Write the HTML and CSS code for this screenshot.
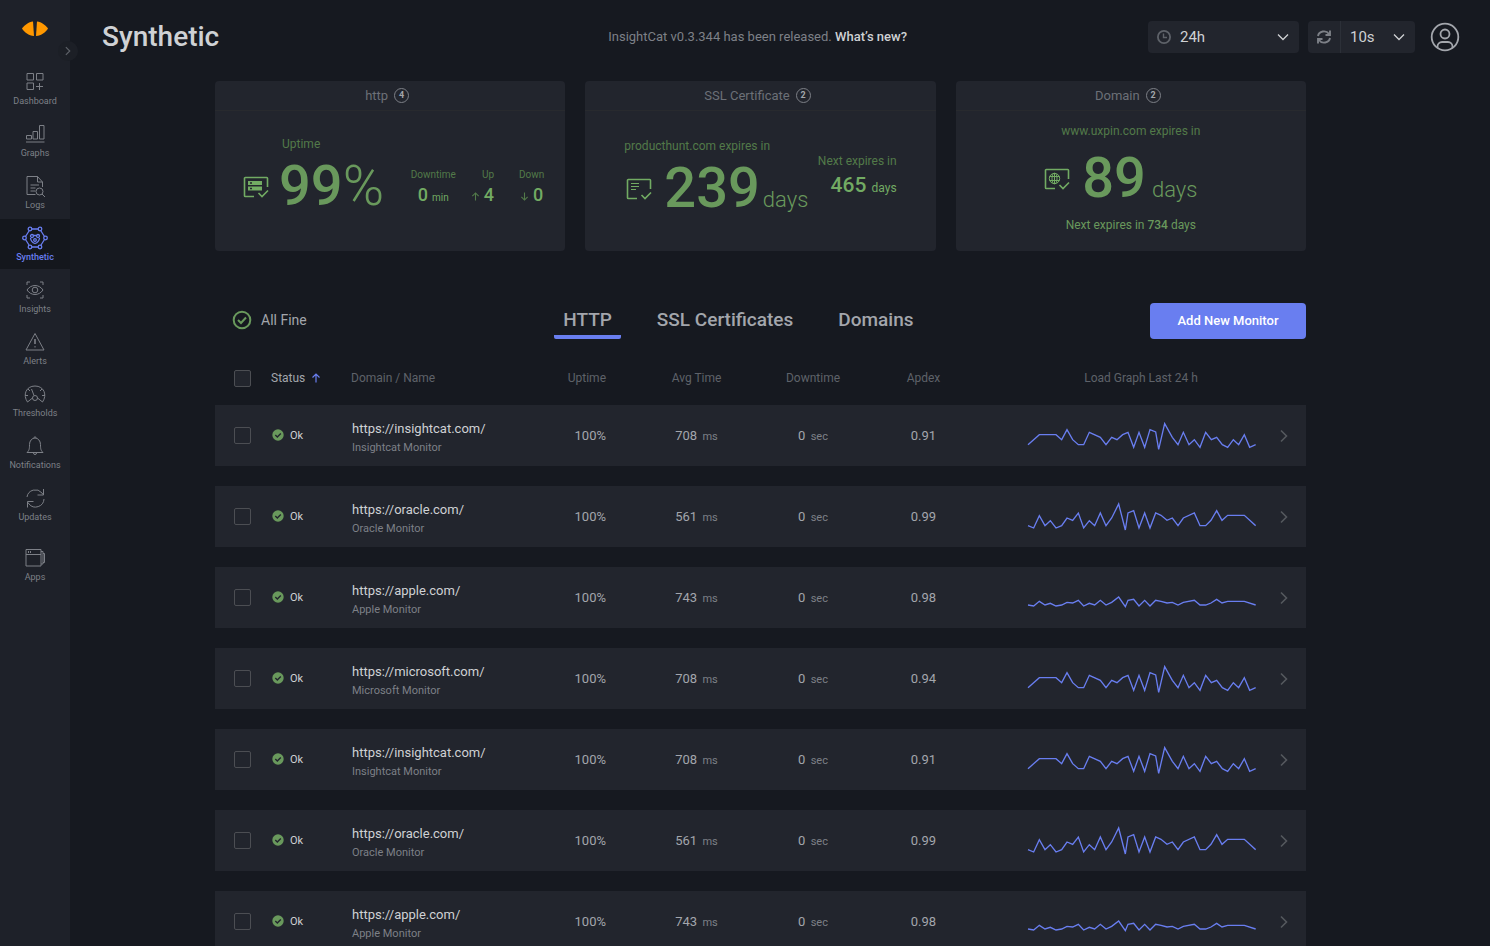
FILE: index.html
```html
<!DOCTYPE html>
<html lang="en">
<head>
  <meta charset="UTF-8" />
  <title>Synthetic - InsightCat</title>
  <meta name="viewport" content="width=device-width, initial-scale=1.0" />
  <link rel="stylesheet" href="styles.css">
</head>
<body>
  <!-- shared shapes -->
  <svg class="sprite" aria-hidden="true">
    <symbol id="ok" viewBox="0 0 12 12">
      <circle cx="6" cy="6" r="5.7" fill="#69995c" />
      <path d="M3.3 6.1l2 1.9 3.5-3.6" fill="none" stroke="#22252d" stroke-width="1.4" />
    </symbol>
    <symbol id="chevron" viewBox="0 0 8 14">
      <path d="M1 1.5L6.5 7 1 12.5" fill="none" stroke="currentColor" stroke-width="1.6" />
    </symbol>
    <symbol id="chevron-down" viewBox="0 0 12 8">
      <path d="M1 1.5l5 5 5-5" fill="none" stroke="currentColor" stroke-width="1.3" />
    </symbol>
    <symbol id="arrow-up" viewBox="0 0 10 10">
      <path d="M5 9.5V1M1.5 4.5L5 1l3.5 3.5" fill="none" stroke="currentColor" stroke-width="1.2" />
    </symbol>
    <symbol id="arrow-down" viewBox="0 0 10 10">
      <path d="M5 .5V9M1.5 5.5L5 9l3.5-3.5" fill="none" stroke="currentColor" stroke-width="1.2" />
    </symbol>
    <symbol id="card-frame" viewBox="0 0 26 22">
      <path d="M11 20.5H2.3a.8.8 0 0 1-.8-.8V2.3a.8.8 0 0 1 .8-.8h21.4a.8.8 0 0 1 .8.8V11M15.5 17l3.5 3.5 6-6" fill="none" stroke="currentColor" stroke-width="1.6" />
    </symbol>
    <symbol id="graph-a" viewBox="20 32 690 90">
      <polyline points="26,103 60,73 110,73 127,88 143,58 160,88 177,103 193,103 210,66 243,81 260,103 277,81 293,88 310,73 326,66 343,111 359,66 376,111 392,58 409,65 418,117 436,40 459,81 476,103 492,66 509,103 525,88 542,111 559,66 576,88 592,81 609,103 625,111 642,88 658,103 675,73 691,111 709,103" />
    </symbol>
    <symbol id="graph-b" viewBox="20 35 690 90">
      <polyline points="26,106 43,113 60,76 77,106 93,91 110,113 127,106 143,83 160,90 177,68 193,113 210,91 226,106 243,68 260,106 277,83 298,41 318,119 326,68 343,61 359,113 376,68 392,113 409,68 425,75 443,90 459,83 476,106 492,83 525,68 542,106 559,106 575,90 592,61 608,90 625,75 675,75 709,106" />
    </symbol>
    <symbol id="graph-c" viewBox="20 278 690 90">
      <polyline points="26,344 43,347 60,333 77,344 93,339 110,347 127,344 143,336 160,338 177,330 193,347 210,339 226,344 243,330 260,344 277,336 298,320 318,349 326,330 343,327 359,347 376,330 392,347 409,330 425,333 443,338 459,336 476,344 492,336 525,330 542,344 559,344 575,338 592,327 608,338 625,333 675,333 709,344" />
    </symbol>
  </svg>

  <div class="app">
    <aside class="sidebar">
      <a class="logo" href="#" aria-label="InsightCat">
        <svg width="26" height="16" viewBox="0 0 26 16" fill="#ff9800">
          <path d="M11 .5C6.500 1 2.500 4 0 7.500c2.500 4 6.500 7 12 7.500z" />
          <path d="M15 .5c4.500.5 8.500 3.500 11 7-2.500 4-6.500 7-12 7.500z" />
        </svg>
      </a>
      <button class="toggle" type="button" aria-label="Expand menu"><svg width="6" height="10"><use href="#chevron" /></svg></button>
      <nav class="nav">
        <a href="#">
          <svg width="22" height="22" viewBox="0 0 22 22"><path d="M3 2.5h6.5V9H3zM12.5 2.5H19V9h-6.5zM3 12h6.5v6.5H3zM15.5 12v7M12 15.5h7" /></svg>
          Dashboard
        </a>
        <a href="#">
          <svg width="22" height="22" viewBox="0 0 22 22"><path d="M2.5 12.5h5V16h-5zM9 8.5h4.5V16H9zM15.5 2.5H20V16h-4.5zM2 19h18.5" /></svg>
          Graphs
        </a>
        <a href="#">
          <svg width="22" height="22" viewBox="0 0 22 22"><path d="M11.5 19.500H3V1.500h10.500L18.500 7v5M13.500 1.500V7h5M6.500 10h8.500M6.500 13h5M6.500 16h5" /><circle cx="15.500" cy="16.500" r="3.500" /><path d="M18 19l3 3" /></svg>
          Logs
        </a>
        <a href="#" class="active" aria-current="page">
          <svg width="26" height="24" viewBox="0 0 26 24"><path d="M10 3h6M10 21h6M7 5L3.500 10.500M3.500 13.500L7 19M19 5l3.500 5.500M22.500 13.500L19 19" /><circle cx="8" cy="3" r="1.800" /><circle cx="18" cy="3" r="1.800" /><circle cx="8" cy="21" r="1.800" /><circle cx="18" cy="21" r="1.800" /><circle cx="2.500" cy="12" r="1.800" /><circle cx="23.500" cy="12" r="1.800" /><path d="M11.500 9.500h3M8.500 12c.3 3 2 4.700 4.500 5.500 2.500-.8 4.200-2.500 4.500-5.500" /><circle cx="10" cy="10" r="1.500" /><circle cx="16" cy="10" r="1.500" /><circle cx="13" cy="14" r="1.300" /></svg>
          Synthetic
        </a>
        <a href="#">
          <svg width="22" height="22" viewBox="0 0 22 22"><path d="M3 6V3h3M16 3h3v3M3 16v3h3M16 19h3v-3M3 11c4-6 12-6 16 0-4 6-12 6-16 0z" /><circle cx="11" cy="11" r="2.800" /></svg>
          Insights
        </a>
        <a href="#">
          <svg width="22" height="22" viewBox="0 0 22 22"><path d="M11 2.500L2 19h18zM11 15v1.500" /><path d="M11 8v5" stroke-width="1.600" /></svg>
          Alerts
        </a>
        <a href="#">
          <svg width="22" height="22" viewBox="0 0 22 22"><path d="M3.500 19C-1.500 12 2 3 11 3s12.500 9 7.500 16l-5-4M3.500 19l5-4M1 12.500h3M18 12.500h3M4 6l2 2M18 6l-2 2M7.500 6l2.500 6.500" /><circle cx="11" cy="15" r="2.500" /></svg>
          Thresholds
        </a>
        <a href="#">
          <svg width="22" height="22" viewBox="0 0 22 22"><path d="M3 17.500c2-2 2.500-3 2.500-8a5.500 6.500 0 0 1 11 0c0 5 .5 6 2.500 8zM10 2.800a1 1 0 0 1 2 0M9.500 18a1.500 1.500 0 0 0 3 0" /></svg>
          Notifications
        </a>
        <a href="#">
          <svg width="22" height="22" viewBox="0 0 22 22"><path d="M3 10a8.500 8.500 0 0 1 15-4l1 1.500M19.500 2v6h-6M20 12a8.500 8.500 0 0 1-15 5l-1-1.500M3.500 20.500v-6h6" /></svg>
          Updates
        </a>
        <a href="#" class="apps">
          <svg width="22" height="22" viewBox="0 0 22 22"><path d="M2 2.500h15v16.500H2zM2 7.500h15M4.500 4v2M6.500 4v2M17 4.500h2v12.500h-2M19 6.500h1.500v9H19" /></svg>
          Apps
        </a>
      </nav>
    </aside>

    <main class="main">
      <header class="header">
        <h1>Synthetic</h1>
        <p class="banner">InsightCat v0.3.344 has been released. <a href="#">What’s new?</a></p>
        <div class="controls">
          <div class="control period">
            <svg width="14" height="14" viewBox="0 0 14 14" fill="none" stroke="#5e6269" stroke-width="1.800"><circle cx="7" cy="7" r="6.100" /><path d="M6.500 3.500v4H10" stroke-width="1.400" /></svg>
            <select aria-label="Period"><option>24h</option><option>1h</option><option>7d</option></select>
            <svg class="caret" width="12" height="8"><use href="#chevron-down" /></svg>
          </div>
          <div class="control interval">
            <button type="button" aria-label="Refresh">
              <svg width="14" height="14" viewBox="0 0 14 14" fill="none" stroke="#7d8087" stroke-width="1.900"><path d="M1 6a6 5.500 0 0 1 11-2M13 .5V5H8.500M13 8a6 5.500 0 0 1-11 2M1 13.500V9h4.500" /></svg>
            </button>
            <select aria-label="Refresh interval"><option>10s</option><option>30s</option><option>1m</option></select>
            <svg class="caret" width="12" height="8"><use href="#chevron-down" /></svg>
          </div>
          <button class="avatar" type="button" aria-label="Account">
            <svg width="30" height="30" viewBox="0 0 30 30" fill="none" stroke="#a3a6ac" stroke-width="1.800"><circle cx="15" cy="15" r="13.300" /><circle cx="15" cy="12" r="4.500" /><path d="M7.500 26v-1.500a4.500 4.500 0 0 1 4.500-4.500h6a4.500 4.500 0 0 1 4.500 4.500V26" /></svg>
          </button>
        </div>
      </header>

      <div class="content">
        <section class="cards">
          <article class="card">
            <h2>http <span class="count">4</span></h2>
            <div class="card-body http">
              <svg class="card-icon" width="26" height="22"><use href="#card-frame" /><path d="M5 5h14v4H5zM5 10.500h14v4H5z" fill="currentColor" /><path d="M7 7h2M7 12.500h2" stroke="#22252d" stroke-width="1.300" /></svg>
              <div class="uptime">
                <div class="label">Uptime</div>
                <div class="number">99<span class="percent">%</span></div>
              </div>
              <dl class="stats">
                <div><dt>Downtime</dt><dd>0 <small>min</small></dd></div>
                <div><dt>Up</dt><dd><svg width="9" height="9"><use href="#arrow-up" /></svg>4</dd></div>
                <div><dt>Down</dt><dd><svg width="9" height="9"><use href="#arrow-down" /></svg>0</dd></div>
              </dl>
            </div>
          </article>

          <article class="card">
            <h2>SSL Certificate <span class="count">2</span></h2>
            <div class="card-body ssl">
              <div class="expiry">
                <div class="label">producthunt.com expires in</div>
                <div class="reading">
                  <svg class="card-icon" width="26" height="22"><use href="#card-frame" /><path d="M5 5.500h8M5 8.500h8M5 11.500h5" stroke="currentColor" stroke-width="1.200" /></svg>
                  <div class="number">239<span class="days">days</span></div>
                </div>
              </div>
              <div class="next">
                <div class="label">Next expires in</div>
                <div class="next-value">465 <small>days</small></div>
              </div>
            </div>
          </article>

          <article class="card">
            <h2>Domain <span class="count">2</span></h2>
            <div class="card-body domain">
              <div class="label">www.uxpin.com expires in</div>
              <div class="reading">
                <svg class="card-icon" width="26" height="22"><use href="#card-frame" /><g fill="none" stroke="currentColor"><circle cx="10.500" cy="10.500" r="5.200" /><ellipse cx="10.500" cy="10.500" rx="2.500" ry="5.200" /><path d="M10.500 5v11M5.500 8.500h10M5.500 12.500h10" /></g></svg>
                <div class="number">89<span class="days">days</span></div>
              </div>
              <div class="next-line">Next expires in <b>734</b> days</div>
            </div>
          </article>
        </section>

        <div class="toolbar">
          <div class="all-fine">
            <svg width="20" height="20" viewBox="0 0 20 20" fill="none" stroke="#69995c" stroke-width="2"><circle cx="10" cy="10" r="8.300" /><path d="M6 10l3 3 5-5.500" /></svg>
            All Fine
          </div>
          <nav class="tabs">
            <a href="#" class="active">HTTP</a>
            <a href="#">SSL Certificates</a>
            <a href="#">Domains</a>
          </nav>
          <button class="add" type="button">Add New Monitor</button>
        </div>

        <table class="monitors">
          <colgroup>
            <col class="c-check"><col class="c-status"><col><col class="c-uptime"><col class="c-avg"><col class="c-down"><col class="c-apdex"><col class="c-graph"><col class="c-more">
          </colgroup>
          <thead>
            <tr>
              <th class="check"><input type="checkbox" aria-label="Select all"></th>
              <th class="sorted">Status <svg width="10" height="10"><use href="#arrow-up" /></svg></th>
              <th class="name">Domain / Name</th>
              <th class="up">Uptime</th>
              <th>Avg Time</th>
              <th>Downtime</th>
              <th class="apdex">Apdex</th>
              <th>Load Graph Last 24 h</th>
              <th></th>
            </tr>
          </thead>
          <tbody>
            <tr>
              <td class="check"><input type="checkbox" aria-label="Select Insightcat Monitor"></td>
              <td class="status"><svg width="12" height="12"><use href="#ok" /></svg>Ok</td>
              <td class="name"><a href="#">https://insightcat.com/</a><small>Insightcat Monitor</small></td>
              <td class="up">100%</td>
              <td>708 <small>ms</small></td>
              <td>0 <small>sec</small></td>
              <td class="apdex">0.91</td>
              <td><svg class="graph" width="230" height="30"><use href="#graph-a" /></svg></td>
              <td class="more"><svg width="8" height="14"><use href="#chevron" /></svg></td>
            </tr>
            <tr>
              <td class="check"><input type="checkbox" aria-label="Select Oracle Monitor"></td>
              <td class="status"><svg width="12" height="12"><use href="#ok" /></svg>Ok</td>
              <td class="name"><a href="#">https://oracle.com/</a><small>Oracle Monitor</small></td>
              <td class="up">100%</td>
              <td>561 <small>ms</small></td>
              <td>0 <small>sec</small></td>
              <td class="apdex">0.99</td>
              <td><svg class="graph" width="230" height="30"><use href="#graph-b" /></svg></td>
              <td class="more"><svg width="8" height="14"><use href="#chevron" /></svg></td>
            </tr>
            <tr>
              <td class="check"><input type="checkbox" aria-label="Select Apple Monitor"></td>
              <td class="status"><svg width="12" height="12"><use href="#ok" /></svg>Ok</td>
              <td class="name"><a href="#">https://apple.com/</a><small>Apple Monitor</small></td>
              <td class="up">100%</td>
              <td>743 <small>ms</small></td>
              <td>0 <small>sec</small></td>
              <td class="apdex">0.98</td>
              <td><svg class="graph" width="230" height="30"><use href="#graph-c" /></svg></td>
              <td class="more"><svg width="8" height="14"><use href="#chevron" /></svg></td>
            </tr>
            <tr>
              <td class="check"><input type="checkbox" aria-label="Select Microsoft Monitor"></td>
              <td class="status"><svg width="12" height="12"><use href="#ok" /></svg>Ok</td>
              <td class="name"><a href="#">https://microsoft.com/</a><small>Microsoft Monitor</small></td>
              <td class="up">100%</td>
              <td>708 <small>ms</small></td>
              <td>0 <small>sec</small></td>
              <td class="apdex">0.94</td>
              <td><svg class="graph" width="230" height="30"><use href="#graph-a" /></svg></td>
              <td class="more"><svg width="8" height="14"><use href="#chevron" /></svg></td>
            </tr>
            <tr>
              <td class="check"><input type="checkbox" aria-label="Select Insightcat Monitor"></td>
              <td class="status"><svg width="12" height="12"><use href="#ok" /></svg>Ok</td>
              <td class="name"><a href="#">https://insightcat.com/</a><small>Insightcat Monitor</small></td>
              <td class="up">100%</td>
              <td>708 <small>ms</small></td>
              <td>0 <small>sec</small></td>
              <td class="apdex">0.91</td>
              <td><svg class="graph" width="230" height="30"><use href="#graph-a" /></svg></td>
              <td class="more"><svg width="8" height="14"><use href="#chevron" /></svg></td>
            </tr>
            <tr>
              <td class="check"><input type="checkbox" aria-label="Select Oracle Monitor"></td>
              <td class="status"><svg width="12" height="12"><use href="#ok" /></svg>Ok</td>
              <td class="name"><a href="#">https://oracle.com/</a><small>Oracle Monitor</small></td>
              <td class="up">100%</td>
              <td>561 <small>ms</small></td>
              <td>0 <small>sec</small></td>
              <td class="apdex">0.99</td>
              <td><svg class="graph" width="230" height="30"><use href="#graph-b" /></svg></td>
              <td class="more"><svg width="8" height="14"><use href="#chevron" /></svg></td>
            </tr>
            <tr>
              <td class="check"><input type="checkbox" aria-label="Select Apple Monitor"></td>
              <td class="status"><svg width="12" height="12"><use href="#ok" /></svg>Ok</td>
              <td class="name"><a href="#">https://apple.com/</a><small>Apple Monitor</small></td>
              <td class="up">100%</td>
              <td>743 <small>ms</small></td>
              <td>0 <small>sec</small></td>
              <td class="apdex">0.98</td>
              <td><svg class="graph" width="230" height="30"><use href="#graph-c" /></svg></td>
              <td class="more"><svg width="8" height="14"><use href="#chevron" /></svg></td>
            </tr>
          </tbody>
        </table>
      </div>
    </main>
  </div>
</body>
</html>
```
FILE: styles.css
```css
* {
  box-sizing: border-box;
}

body {
  margin: 0;
  background-color: #161920;
  color: #a3a6ac;
  font-family: Roboto, sans-serif;
  font-size: 13px;
}

a {
  color: inherit;
  text-decoration: none;
}

button,
select {
  font-family: inherit;
  color: inherit;
  border: none;
  background: none;
  padding: 0;
  cursor: pointer;
}

.sprite {
  position: absolute;
  width: 0;
  height: 0;
}

.app {
  display: grid;
  grid-template-columns: 70px 1fr;
  height: 100vh;
}

/* sidebar */
.sidebar {
  position: relative;
  background-color: #1e2129;
}

.logo {
  display: flex;
  justify-content: center;
  padding-top: 21px;
  height: 63px;
}

.toggle {
  position: absolute;
  top: 41px;
  right: -8px;
  width: 20px;
  height: 20px;
  border-radius: 50%;
  background-color: #1c1f26;
  color: #5e6269;
  display: flex;
  align-items: center;
  justify-content: center;
}

.nav {
  display: flex;
  flex-direction: column;
  gap: 2px;
}

.nav a {
  display: flex;
  flex-direction: column;
  align-items: center;
  justify-content: space-between;
  height: 50px;
  padding: 7px 0 6px;
  font-size: 9px;
  line-height: 12px;
  color: #7d8087;
}

.nav svg {
  flex: 0 0 24px;
  fill: none;
  stroke: currentColor;
  overflow: visible;
}

.nav a.active {
  background-color: #14171d;
  color: #697ef0;
  font-weight: 500;
}

.nav a.active svg {
  stroke-width: 1.3;
}

.nav a.apps {
  margin-top: 8px;
}

/* header */
.main {
  overflow-y: auto;
  scrollbar-width: none;
}

.header {
  display: flex;
  align-items: center;
  height: 74px;
  padding: 0 30px 0 32px;
}

.header h1 {
  margin: 0;
  padding-bottom: 2px;
  font-size: 28px;
  font-weight: 500;
  color: #cfd1d4;
}

.banner {
  flex: 1;
  margin: 0;
  padding: 0 0 2px 148px;
  text-align: center;
  color: #7d8087;
}

.banner a {
  color: #cfd1d4;
  font-weight: 500;
}

.controls {
  display: flex;
  align-items: center;
}

.control {
  position: relative;
  display: flex;
  align-items: center;
  height: 32px;
  background-color: #22252d;
  border-radius: 4px;
}

.control select {
  appearance: none;
  flex: 1;
  height: 32px;
  font-size: 15px;
  color: #cfd1d4;
  padding-left: 9px;
}

.control .caret {
  position: absolute;
  right: 10px;
  color: #cfd1d4;
  pointer-events: none;
}

.period {
  width: 151px;
  padding-left: 9px;
}

.interval {
  width: 107px;
  margin-left: 9px;
}

.interval button {
  width: 33px;
  height: 32px;
  border-right: 1px solid #2c3038;
  display: flex;
  align-items: center;
  justify-content: center;
}

.avatar {
  display: flex;
  margin-left: 15px;
}

.content {
  padding: 7px 184px 0 145px;
}

/* summary cards */
.cards {
  display: grid;
  grid-template-columns: repeat(3, 1fr);
  gap: 20px;
}

.card {
  background-color: #22252d;
  border-radius: 4px;
  color: #72ab63;
}

.card h2 {
  display: flex;
  align-items: center;
  justify-content: center;
  gap: 6px;
  height: 30px;
  margin: 0;
  padding-right: 6px;
  border-bottom: 1px solid #282a2e;
  font-size: 13px;
  font-weight: 400;
  color: #6c7077;
}

.count {
  width: 15px;
  height: 15px;
  border: 1px solid #7d8087;
  border-radius: 50%;
  font-size: 9px;
  font-weight: 700;
  line-height: 13px;
  text-align: center;
  color: #a3a6ac;
}

.card-body {
  display: flex;
  height: 140px;
}

.label {
  font-size: 12px;
  line-height: 20px;
  color: #527a49;
}

.number {
  font-size: 56px;
  font-weight: 500;
  line-height: 64px;
  color: #69995c;
}

.percent {
  font-weight: 300;
}

.days {
  margin-left: 3px;
  font-size: 22px;
  font-weight: 300;
  line-height: 1;
}

.card-icon {
  margin-bottom: 20px;
}

.reading {
  display: flex;
  align-items: flex-end;
  gap: 12px;
}

.http {
  align-items: flex-end;
  padding: 0 21px 33px 28px;
}

.uptime {
  margin-left: 10px;
}

.uptime .label {
  padding-left: 3px;
}

.stats {
  display: flex;
  justify-content: flex-end;
  gap: 15px;
  flex: 1;
  margin: 0 0 10px;
  text-align: right;
  line-height: 20px;
}

.stats div:last-child {
  margin-left: 10px;
}

.stats dt {
  font-size: 10px;
  color: #527a49;
}

.stats dd {
  display: flex;
  align-items: baseline;
  justify-content: center;
  gap: 4px;
  margin: 0;
  font-size: 18px;
  font-weight: 500;
}

.stats small {
  font-size: 10px;
  font-weight: 400;
}

.stats svg {
  color: #527a49;
}

.ssl {
  padding: 25px 39px 0;
  justify-content: space-between;
}

.ssl .reading {
  padding-left: 2px;
}

.next {
  padding-top: 15px;
  text-align: right;
}

.next-value {
  font-size: 21px;
  font-weight: 500;
  line-height: 28px;
}

.next-value small {
  font-size: 12px;
  font-weight: 400;
}

.domain {
  flex-direction: column;
  align-items: center;
  padding-top: 10px;
}

.domain .reading {
  padding: 5px 20px 6px 0;
}

.domain .days {
  margin-left: 6px;
}

.next-line {
  font-size: 12px;
  line-height: 18px;
  color: #69995c;
}

.next-line b {
  font-weight: 500;
}

/* toolbar */
.toolbar {
  display: flex;
  align-items: center;
  justify-content: space-between;
  margin-top: 52px;
  height: 36px;
}

.all-fine {
  display: flex;
  align-items: center;
  gap: 9px;
  padding: 0 0 3px 17px;
  font-size: 14px;
}

.tabs {
  display: flex;
  gap: 27px;
  padding-left: 20px;
}

.tabs a {
  padding: 5px 9px 3px;
  border-bottom: 4px solid transparent;
  font-size: 19px;
  font-weight: 500;
  line-height: 24px;
}

.tabs a.active {
  border-bottom-color: #697ef0;
  border-radius: 2px;
}

.add {
  width: 156px;
  height: 36px;
  padding-bottom: 2px;
  border-radius: 4px;
  background-color: #697ef0;
  color: #fff;
  font-size: 13px;
  font-weight: 500;
}

/* monitors */
.monitors {
  width: 100%;
  margin-top: 12px;
  table-layout: fixed;
  border-collapse: separate;
  border-spacing: 0 20px;
}

.c-check { width: 56px; }
.c-status { width: 80px; }
.c-uptime { width: 100px; }
.c-avg { width: 113px; }
.c-down { width: 120px; }
.c-apdex { width: 148px; }
.c-graph { width: 240px; }
.c-more { width: 45px; }

.monitors th {
  height: 14px;
  padding: 0;
  font-size: 12px;
  line-height: 14px;
  font-weight: 400;
  color: #5e6269;
}

.monitors .sorted {
  text-align: left;
  color: #a3a6ac;
}

.sorted svg {
  margin-left: 3px;
  color: #697ef0;
  vertical-align: -1px;
}

.monitors td {
  height: 61px;
  padding: 0;
  background-color: #22252d;
  text-align: center;
}

.monitors td small {
  margin-left: 2px;
  font-size: 11px;
  color: #7d8087;
}

.monitors .check {
  padding-left: 19px;
  text-align: left;
}

.check input {
  appearance: none;
  display: block;
  width: 17px;
  height: 17px;
  margin: 0;
  border: 1px solid #4c4e53;
  border-radius: 2px;
}

th.check input {
  margin: -2px 0;
  background-color: #22252d;
}

.monitors .name {
  text-align: left;
}

.monitors td.name {
  padding: 4px 0 0 1px;
  line-height: 19px;
}

.name a {
  display: block;
  font-size: 13px;
  color: #cfd1d4;
}

.monitors .name small {
  display: block;
  margin: 0;
}

.monitors .status {
  text-align: left;
  font-size: 11px;
  color: #cfd1d4;
}

.status svg {
  margin: 0 6px 0 1px;
  vertical-align: -2px;
}

.monitors .up {
  padding-right: 34px;
  text-align: right;
}

.monitors .apdex {
  padding-right: 47px;
}

.graph {
  display: block;
  margin: 0 auto;
  fill: none;
  stroke: #697ef0;
  stroke-width: 4;
}

.more svg {
  display: block;
  margin: 0 auto;
  color: #55585e;
}
```
